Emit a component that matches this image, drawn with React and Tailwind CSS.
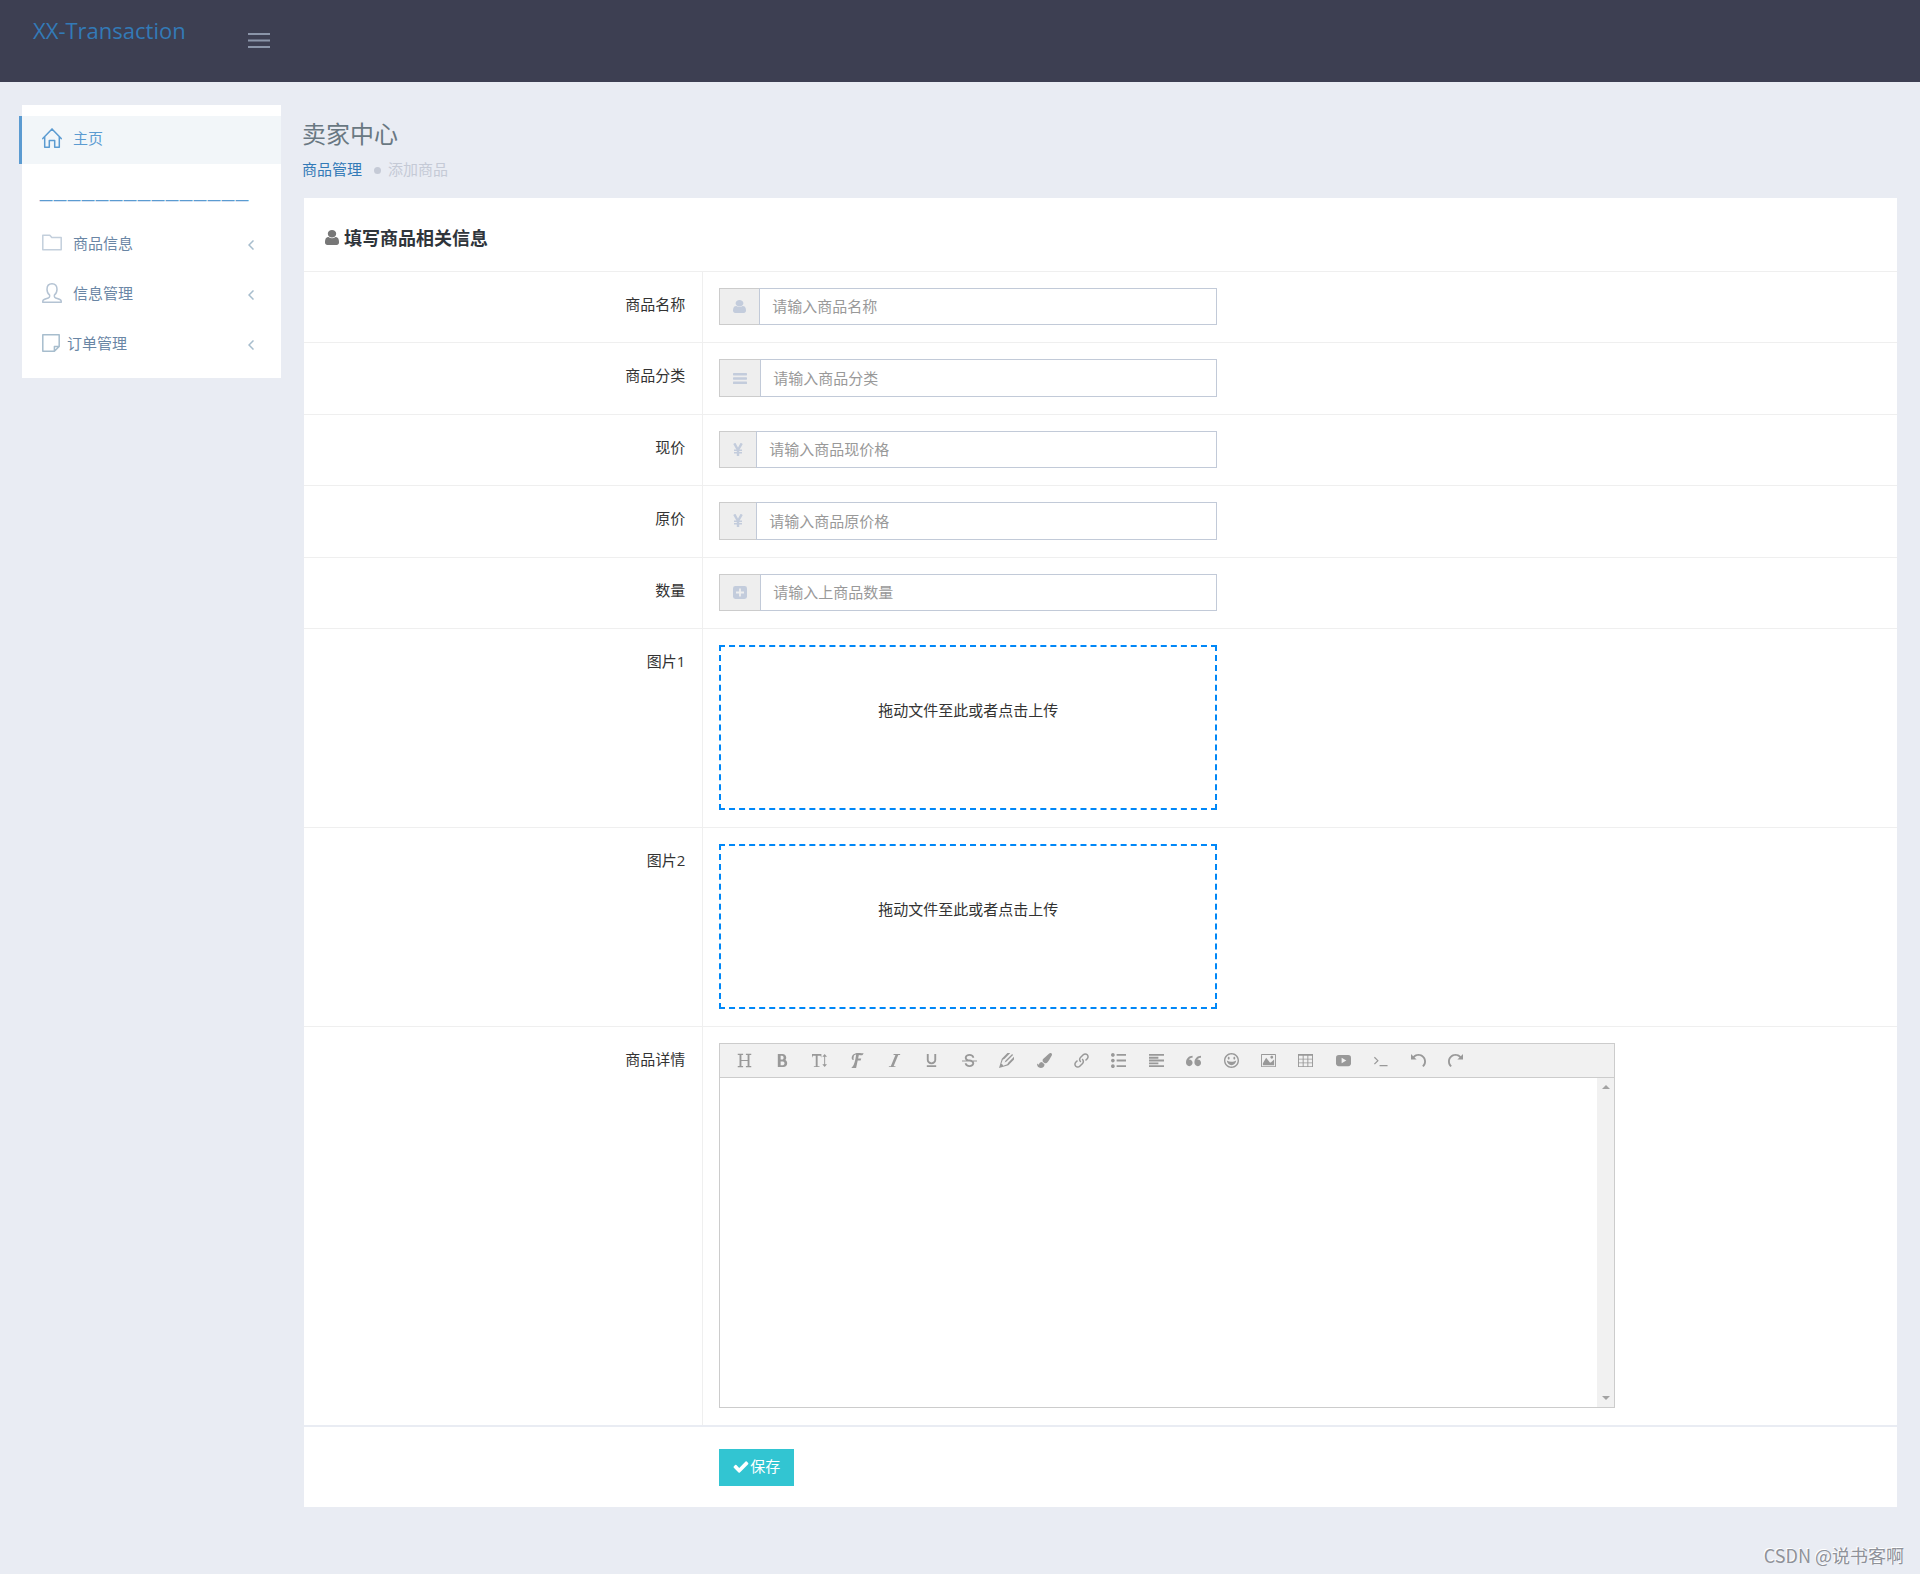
import React, { useState } from 'react';
import {
    ImBold, ImTextHeight, ImFont, ImItalic, ImUnderline, ImStrikethrough, ImPencil2, ImLink,
    ImList2, ImParagraphLeft, ImQuotesLeft, ImHappy, ImImage, ImTable2, ImUndo, ImRedo,
} from 'react-icons/im';
import { FaPaintBrush } from 'react-icons/fa';

function UserIcon({ className }) {
    return (
        <svg viewBox="0 128 1280 1536" preserveAspectRatio="none" fill="currentColor" className={className} aria-hidden="true">
            <path d="M1280 1399q0 109-62.5 187t-150.5 78h-854q-88 0-150.5-78t-62.5-187q0-85 8.5-160.5t31.5-152 58.5-131 94-89 134.5-34.5q131 128 313 128t313-128q76 0 134.5 34.5t94 89 58.5 131 31.5 152 8.5 160.5zm-256-887q0 159-112.5 271.5t-271.5 112.5-271.5-112.5-112.5-271.5 112.5-271.5 271.5-112.5 271.5 112.5 112.5 271.5z" />
        </svg>
    );
}

function BarsIcon({ className }) {
    return (
        <svg viewBox="0 0 14 13" fill="currentColor" className={className} aria-hidden="true">
            <rect y="1" width="14" height="2.4" rx="0.6" />
            <rect y="5.3" width="14" height="2.4" rx="0.6" />
            <rect y="9.6" width="14" height="2.4" rx="0.6" />
        </svg>
    );
}

function YenIcon({ className }) {
    return (
        <svg viewBox="0 0 10 13" fill="none" stroke="currentColor" className={className} aria-hidden="true">
            <path d="M1.3 0.3 5 7 8.700 0.300M5 6.500V13" strokeWidth="2.400" />
            <path d="M1 7.200h8M1 9.700h8" strokeWidth="1.500" />
        </svg>
    );
}

function PlusSquareIcon({ className }) {
    return (
        <svg viewBox="0 0 14 13" className={className} aria-hidden="true">
            <rect width="14" height="13" rx="2.4" fill="currentColor" />
            <path d="M7 2.6v7.8M3 6.5h8" stroke="#eeeeee" strokeWidth="1.8" />
        </svg>
    );
}

function CheckIcon({ className }) {
    return (
        <svg viewBox="100 300 1600 1250" fill="currentColor" className={className} aria-hidden="true">
            <path d="M1671 566q0 40-28 68l-724 724-136 136q-28 28-68 28t-68-28l-136-136-362-362q-28-28-28-68t28-68l136-136q28-28 68-28t68 28l294 295 656-657q28-28 68-28t68 28l136 136q28 28 28 68z" />
        </svg>
    );
}

function HomeIcon({ className }) {
    return (
        <svg viewBox="0 0 20 20" fill="none" stroke="currentColor" strokeWidth="1.5" strokeLinejoin="round" strokeLinecap="round" className={className} aria-hidden="true">
            <path d="M0.8 10.6 10 0.9l9.2 9.7M2.7 9v10.2h4.6v-6.8h5.4v6.8h4.6V9" />
        </svg>
    );
}

function FolderIcon({ className }) {
    return (
        <svg viewBox="0 0 20 20" fill="none" stroke="currentColor" strokeWidth="1.5" strokeLinejoin="round" className={className} aria-hidden="true">
            <path d="M0.8 16.7V2.2h7l2 2.4h9.4v12.1z" />
        </svg>
    );
}

function PersonIcon({ className }) {
    return (
        <svg viewBox="0 0 20 20" fill="none" stroke="currentColor" strokeWidth="1.5" strokeLinejoin="round" className={className} aria-hidden="true">
            <path d="M10 0.8C6.6 0.8 5 3 5 6.2c0 2.6 1.1 4.7 2.6 5.8v1.5c0 .8-.5 1.2-1.300 1.500-1.600.6-3.800 1.100-4.800 1.900-.6.500-.8 1.400-.8 2.300h18.600c0-.9-.2-1.800-.8-2.300-1-.8-3.200-1.300-4.800-1.900-.8-.3-1.300-.7-1.300-1.500V12C13.900 10.900 15 8.800 15 6.200 15 3 13.400.8 10 .8z" />
        </svg>
    );
}

function NoteIcon({ className }) {
    return (
        <svg viewBox="0 0 18 18" fill="none" stroke="currentColor" strokeWidth="1.5" strokeLinejoin="round" className={className} aria-hidden="true">
            <path d="M0.8 0.8h16.4v11.600l-4.800 4.800H0.800zM17.200 12.400h-4.800v4.800" />
        </svg>
    );
}

function ChevronIcon({ className }) {
    return (
        <svg viewBox="0 0 6 10" fill="none" stroke="currentColor" strokeWidth="1.5" className={className} aria-hidden="true">
            <path d="M5.500 0.500 1 5l4.500 4.500" />
        </svg>
    );
}

function HeadingIcon({ className }) {
    return (
        <svg viewBox="0 0 16 16" fill="none" stroke="currentColor" className={className} aria-hidden="true">
            <path d="M3.700 1.500v13M12.300 1.500v13" strokeWidth="2" />
            <path d="M0.800 1.500h5.700M9.500 1.500h5.700M0.800 14.500h5.700M9.500 14.500h5.700M3.700 8h8.600" strokeWidth="1.200" />
        </svg>
    );
}

function VideoIcon({ className }) {
    return (
        <svg viewBox="0 0 16 16" className={className} aria-hidden="true">
            <rect y="2" width="16" height="12" rx="3" fill="currentColor" />
            <path d="M6 5v6l5-3z" fill="#f1f1f1" />
        </svg>
    );
}

function TerminalIcon({ className }) {
    return (
        <svg viewBox="0 0 16 16" fill="none" stroke="currentColor" strokeWidth="1.3" className={className} aria-hidden="true">
            <path d="M1.500 4.500 5.200 8.200 1.500 11.900M7 13.400h8.500" />
        </svg>
    );
}

const menuItems = [
    { label: '商品信息', Icon: FolderIcon, iconClass: 'h-5 w-5 text-[#c3cfdc]', gap: 'gap-[11px]' },
    { label: '信息管理', Icon: PersonIcon, iconClass: 'h-5 w-5 text-[#b4c3d3]', gap: 'gap-[11px]' },
    { label: '订单管理', Icon: NoteIcon, iconClass: 'h-[18px] w-[18px] text-[#a7bdcd]', gap: 'gap-[7px]' },
];

const fields = [
    { id: 'name', label: '商品名称', placeholder: '请输入商品名称', Icon: UserIcon, iconClass: 'h-[13px] w-[13px]' },
    { id: 'category', label: '商品分类', placeholder: '请输入商品分类', Icon: BarsIcon, iconClass: 'h-[13px] w-[14px]' },
    { id: 'price', label: '现价', placeholder: '请输入商品现价格', Icon: YenIcon, iconClass: 'h-[13px] w-[10px]' },
    { id: 'originalPrice', label: '原价', placeholder: '请输入商品原价格', Icon: YenIcon, iconClass: 'h-[13px] w-[10px]' },
    { id: 'amount', label: '数量', placeholder: '请输入上商品数量', Icon: PlusSquareIcon, iconClass: 'h-[13px] w-[14px]' },
];

const tools = [
    { name: '标题', Icon: HeadingIcon },
    { name: '粗体', Icon: ImBold },
    { name: '字号', Icon: ImTextHeight },
    { name: '字体', Icon: ImFont },
    { name: '斜体', Icon: ImItalic },
    { name: '下划线', Icon: ImUnderline },
    { name: '删除线', Icon: ImStrikethrough },
    { name: '文字颜色', Icon: ImPencil2 },
    { name: '背景颜色', Icon: FaPaintBrush },
    { name: '链接', Icon: ImLink },
    { name: '列表', Icon: ImList2 },
    { name: '对齐', Icon: ImParagraphLeft },
    { name: '引用', Icon: ImQuotesLeft },
    { name: '表情', Icon: ImHappy },
    { name: '图片', Icon: ImImage },
    { name: '表格', Icon: ImTable2 },
    { name: '视频', Icon: VideoIcon },
    { name: '代码', Icon: TerminalIcon },
    { name: '撤销', Icon: ImUndo },
    { name: '重复', Icon: ImRedo },
];

function FormRow({ label, htmlFor, children }) {
    return (
        <div className="flex border-t border-[#efefef]">
            <div className="w-1/4 shrink-0 pt-5 pr-[17px] text-right leading-6">
                <label htmlFor={htmlFor}>{label}</label>
            </div>
            <div className="flex-1 border-l border-[#efefef] px-4 pt-4 pb-[17px]">{children}</div>
        </div>
    );
}

function UploadBox({ id }) {
    return (
        <label className="block h-[165px] w-full max-w-[498px] cursor-pointer border-2 border-dashed border-[#0087f7] pt-[51px] text-center leading-6">
            拖动文件至此或者点击上传
            <input id={id} type="file" className="sr-only" />
        </label>
    );
}

export default function App() {
    const [menuOpen, setMenuOpen] = useState(true);
    const [values, setValues] = useState({});
    const [detail, setDetail] = useState('');

    return (
        <div className="relative min-h-screen bg-[#e9ecf3] font-['Open_Sans','Noto_Sans_CJK_SC',sans-serif] text-[15px] text-[#333333]">
            <header className="flex h-[82px] items-start bg-[#3d3f52]">
                <a href="#" className="w-[215px] pt-[14px] pl-[33px] text-[22px] leading-8 text-[#337ab7]">XX-Transaction</a>
                <button
                    type="button"
                    aria-label="菜单"
                    onClick={() => setMenuOpen(!menuOpen)}
                    className="mt-[33px] ml-[33px] cursor-pointer text-[#8b95a9]"
                >
                    <svg viewBox="0 0 22 15" fill="currentColor" className="block h-[15px] w-[22px]" aria-hidden="true">
                        <rect width="22" height="2" />
                        <rect y="6.500" width="22" height="2" />
                        <rect y="13" width="22" height="2" />
                    </svg>
                </button>
            </header>

            <div className="flex items-start pt-[23px] pr-[23px] pb-[66px] pl-[22px]">
                {menuOpen && (
                    <nav className="mr-[21px] w-[259px] shrink-0 bg-white pt-[11px] pb-[10px]">
                        <a href="#" className="-ml-[3px] flex h-12 items-center gap-[11px] border-l-[3px] border-[#5b9bd1] bg-[#f2f6f9] pb-1 pl-5 text-[#5b9bd1]">
                            <HomeIcon className="h-5 w-5" />
                            主页
                        </a>
                        <div className="pt-6 pb-[6px] pl-[17px] text-[14px] leading-6 text-[#5b9bd1]">———————————————</div>
                        {menuItems.map(({ label, Icon, iconClass, gap }) => (
                            <a key={label} href="#" className={`flex h-[50px] items-center pr-[27px] pl-5 text-[#6a86a5] ${gap}`}>
                                <Icon className={iconClass} />
                                <span className="flex-1">{label}</span>
                                <ChevronIcon className="mt-1 h-[10px] w-[6px] text-[#a7bdcd]" />
                            </a>
                        ))}
                    </nav>
                )}

                <main className="min-w-0 flex-1">
                    <h1 className="pt-[11px] text-[24px] leading-9 text-[#697882]">卖家中心</h1>
                    <ul className="mb-[17px] flex items-center pt-[5px] leading-6">
                        <li><a href="#" className="text-[#337ab7]">商品管理</a></li>
                        <li className="ml-3 flex items-center gap-[7px] text-[#c5cad6]">
                            <span className="mt-[3px] h-[7px] w-[7px] rounded-full bg-[#c5cad6]" />
                            添加商品
                        </li>
                    </ul>

                    <form onSubmit={(e) => e.preventDefault()} className="ml-[2px] bg-white">
                        <h2 className="flex h-[73px] items-center gap-[5px] pt-2 pl-[21px] text-[18px] font-bold text-[#2f353b]">
                            <UserIcon className="-mt-[2px] h-[15px] w-[14px] text-[#777777]" />
                            填写商品相关信息
                        </h2>

                        <div className="grid h-[357px] grid-rows-5">
                            {fields.map(({ id, label, placeholder, Icon, iconClass }) => (
                                <FormRow key={id} label={label} htmlFor={id}>
                                    <div className="flex h-full w-full max-w-[498px]">
                                        <span className="flex items-center border border-r-0 border-[#cccccc] bg-[#eeeeee] px-[13px] text-[#c3ccdc]">
                                            <Icon className={iconClass} />
                                        </span>
                                        <input
                                            id={id}
                                            type="text"
                                            value={values[id] || ''}
                                            onChange={(e) => setValues({ ...values, [id]: e.target.value })}
                                            placeholder={placeholder}
                                            className="min-w-0 flex-1 border border-[#c2cad8] bg-white px-3 outline-none placeholder:text-[#999999]"
                                        />
                                    </div>
                                </FormRow>
                            ))}
                        </div>

                        <FormRow label="图片1" htmlFor="image1">
                            <UploadBox id="image1" />
                        </FormRow>
                        <FormRow label="图片2" htmlFor="image2">
                            <UploadBox id="image2" />
                        </FormRow>

                        <FormRow label="商品详情" htmlFor="detail">
                            <div className="w-full max-w-[896px] border border-[#cccccc]">
                                <div className="border-b border-[#cccccc] bg-[#f1f1f1] pl-[6px]">
                                    <div className="grid h-[33px] w-[748px] grid-cols-20">
                                        {tools.map(({ name, Icon }) => (
                                            <button key={name} type="button" aria-label={name} className="flex cursor-pointer items-center justify-center pb-px text-[#999999]">
                                                <Icon className="h-[15px] w-[15px]" />
                                            </button>
                                        ))}
                                    </div>
                                </div>
                                <div className="flex h-[329px]">
                                    <textarea
                                        id="detail"
                                        value={detail}
                                        onChange={(e) => setDetail(e.target.value)}
                                        className="min-w-0 flex-1 resize-none px-3 py-2 outline-none"
                                    />
                                    <div className="flex w-[17px] flex-col items-center justify-between bg-[#f1f1f1] py-[7px] text-[#a3a3a3]">
                                        <svg viewBox="0 0 8 4" fill="currentColor" className="h-1 w-2" aria-hidden="true"><path d="M0 4 4 0l4 4z" /></svg>
                                        <svg viewBox="0 0 8 4" fill="currentColor" className="h-1 w-2" aria-hidden="true"><path d="M0 0l4 4 4-4z" /></svg>
                                    </div>
                                </div>
                            </div>
                        </FormRow>

                        <div className="flex border-t-2 border-[#e9ecf3] pt-[22px] pb-[21px]">
                            <div className="w-1/4 shrink-0" />
                            <button type="submit" className="ml-[17px] flex h-[37px] cursor-pointer items-center gap-px bg-[#32c5d2] px-[14px] pb-[2px] text-white">
                                <CheckIcon className="h-3 w-4" />
                                保存
                            </button>
                        </div>
                    </form>
                </main>
            </div>

            <div className="absolute right-4 bottom-[5px] font-['Noto_Sans_CJK_SC',sans-serif] text-[18px] leading-7 text-[#8f9299] [text-shadow:-1px_-1px_0_#ffffff]">
                CSDN @说书客啊
            </div>
        </div>
    );
}
